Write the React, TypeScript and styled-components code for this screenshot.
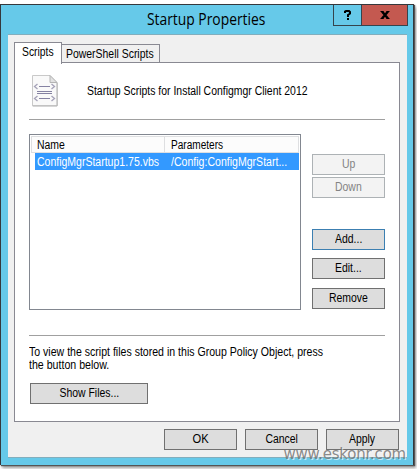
import React from 'react';
import styled, { createGlobalStyle } from 'styled-components';

const GlobalStyle = createGlobalStyle`
  * { box-sizing: border-box; }
  body { margin: 0; background: #fff; overflow: hidden; }
`;

const Page = styled.div`
  position: relative;
  width: 417px;
  height: 469px;
  padding-top: 4px;
  font: 12px/13px 'Liberation Sans', Arial, sans-serif;
  color: #000;
`;

const Window = styled.div`
  display: flex;
  flex-direction: column;
  width: 414px;
  height: 461px;
  padding: 0 7px 7px;
  background: #66c9e9;
  border: 1px solid #35383c;
  border-bottom-width: 0;
  box-shadow: 1px 1px 1px #555, 2px 3px 3px #999;
`;

const TitleBar = styled.header`
  display: flex;
  height: 29px;
  margin-right: -2px;
  flex-shrink: 0;
`;

const Title = styled.h1`
  flex: 1;
  margin: 0;
  padding: 4px 0 0 139px;
  font: 16px/20px 'Open Sans', 'Noto Sans', sans-serif;
  white-space: nowrap;
`;

const CaptionButton = styled.button<{ $close?: boolean }>`
  display: flex;
  align-items: center;
  justify-content: center;
  width: ${p => (p.$close ? 47 : 29)}px;
  height: 21px;
  flex-shrink: 0;
  margin: 0 0 0 ${p => (p.$close ? -1 : 0)}px;
  padding: 0;
  border: 1px solid #35444d;
  border-top: 0;
  background: ${p => (p.$close ? '#c45950' : 'transparent')};
  color: #000;
`;

const Client = styled.main`
  display: flex;
  flex-direction: column;
  width: 399px;
  height: 424px;
  padding: 8px 6px 0;
  background: #f0f0f0;
  border-top: 1px solid #82aebd;
  border-bottom: 1px solid #82aebd;
`;

const Tabs = styled.nav`
  display: flex;
  align-items: flex-end;
  height: 20px;
  margin-top: -1px;
  position: relative;
  z-index: 1;
`;

const Tab = styled.div<{ $active?: boolean }>`
  width: ${p => (p.$active ? 48 : 98)}px;
  height: ${p => (p.$active ? 22 : 18)}px;
  margin-bottom: ${p => (p.$active ? -2 : 0)}px;
  padding: ${p => (p.$active ? '3px 0 0 7px' : '3px 0 0 4px')};
  border: 1px solid #898992;
  border-bottom: 0;
  border-left-width: ${p => (p.$active ? 1 : 0)}px;
  background: ${p => (p.$active ? '#fff' : '#f0f0f0')};
  white-space: nowrap;
`;

const Panel = styled.section`
  display: flex;
  flex-direction: column;
  width: 386px;
  height: 360px;
  padding: 12px 14px 0;
  border: 1px solid #898992;
  background: #fff;
`;

const Label = styled.span<{ $stretch?: number; $center?: boolean }>`
  display: inline-block;
  white-space: nowrap;
  transform: scaleX(${p => p.$stretch ?? 0.87});
  transform-origin: ${p => (p.$center ? 'center' : 'left')};
`;

const Heading = styled.div`
  display: flex;
  height: 44px;
  padding-left: 3px;
  gap: 29px;
  & > span { padding-top: 10px; }
`;

const Rule = styled.div`
  width: 356px;
  height: 1px;
  flex-shrink: 0;
  background: #a0a0a0;
`;

const Content = styled.div`
  display: flex;
  gap: 11px;
  height: 201px;
  margin-top: 14px;
`;

const List = styled.div`
  width: 272px;
  height: 176px;
  padding: 1px;
  border: 1px solid #828790;
`;

const ListHeader = styled.div`
  display: grid;
  grid-template-columns: 134px 134px;
  height: 17px;
`;

const ColumnHeader = styled.div`
  padding: 2px 0 0 6px;
  background: #fcfcfc;
  border: 1px solid #dedfe1;
  border-left-width: 0;
  &:first-child { border-left-width: 1px; padding-left: 5px; }
`;

const ListRow = styled.div`
  display: grid;
  grid-template-columns: 134px 129px;
  height: 17px;
  margin-left: 4px;
  padding: 3px 0 0 2px;
  background: #3399ff;
  color: #fff;
`;

const Actions = styled.div`
  display: flex;
  flex-direction: column;
  padding-top: 20px;
`;

const ButtonFace = styled.button<{ $width?: number; $top?: number; $focus?: boolean }>`
  display: flex;
  align-items: center;
  justify-content: center;
  flex-shrink: 0;
  width: ${p => p.$width ?? 73}px;
  height: 21px;
  margin: ${p => p.$top ?? 0}px 0 0;
  padding: 0;
  font: inherit;
  color: #000;
  background: #dddddd;
  border: 1px solid ${p => (p.$focus ? '#3c7fb1' : '#707070')};
  &:disabled { color: #838383; background: #f3f3f3; border-color: #adb2b5; }
`;

type ButtonProps = React.ComponentProps<typeof ButtonFace> & { stretch?: number };

const Button = ({ children, stretch, ...rest }: ButtonProps) => (
  <ButtonFace {...rest}><Label $center $stretch={stretch}>{children}</Label></ButtonFace>
);

const Note = styled.p`
  margin: 10px 0 11px;
`;

const ShowFilesRow = styled.div`
  padding-left: 1px;
`;

const Footer = styled.footer`
  display: flex;
  justify-content: flex-end;
  gap: 8px;
  width: 385px;
  margin-top: 7px;
`;

const Watermark = styled.div`
  position: absolute;
  right: 11px;
  top: 444px;
  font: 15px/20px 'DejaVu Sans', sans-serif;
  letter-spacing: -0.22px;
  color: rgba(110, 110, 110, 0.8);
  text-shadow: 1px 1px 0 rgba(255, 255, 255, 0.6);
  pointer-events: none;
`;

const ScriptIcon = () => (
  <svg width="26" height="32" viewBox="0 0 26 32" fill="none">
    <path d="M.5 .5H18L25 7.5V31H.5Z" fill="#f9f9f9" stroke="#c9c9c9" />
    <path d="M1 30.8H25.2V8" stroke="#b5b5b5" />
    <path d="M18 .5V7.5H25Z" fill="#e2e2e2" stroke="#b4b4b4" />
    <path d="M5.5 9L2.5 11.5L5.5 14M19.5 9L22.5 11.5L19.5 14M5.5 21L2.5 23.5L5.5 26M19.5 21L22.5 23.5L19.5 26" stroke="#a5a2b8" strokeWidth="1.3" />
    <path d="M7 11.5H18M7 23.5H18M5 16.5H20M5 18.5H20" stroke="#8582a2" />
  </svg>
);

const HelpGlyph = () => (
  <svg width="8" height="10" viewBox="0 0 8 10" fill="none" stroke="#000" strokeWidth="2">
    <path d="M1 3V1.5L2 1H5L6 2V3.5L4 5V7M3 9H5" />
  </svg>
);

const CloseGlyph = () => (
  <svg width="10" height="8" viewBox="0 0 10 8" fill="none" stroke="#000">
    <path d="M2 .5L8 7.5M8 .5L2 7.5" strokeWidth="2.4" />
    <path d="M.5 .5H3.5M6.5 .5H9.5M.5 7.5H3.5M6.5 7.5H9.5" />
  </svg>
);

export default function App() {
  return (
    <Page>
      <GlobalStyle />
      <Window>
        <TitleBar>
          <Title><Label $stretch={0.865}>Startup Properties</Label></Title>
          <CaptionButton aria-label="Help"><HelpGlyph /></CaptionButton>
          <CaptionButton $close aria-label="Close"><CloseGlyph /></CaptionButton>
        </TitleBar>
        <Client>
          <Tabs>
            <Tab $active><Label $stretch={0.86}>Scripts</Label></Tab>
            <Tab><Label>PowerShell Scripts</Label></Tab>
          </Tabs>
          <Panel>
            <Heading>
              <ScriptIcon />
              <Label>Startup Scripts for Install Configmgr Client 2012</Label>
            </Heading>
            <Rule />
            <Content>
              <List>
                <ListHeader>
                  <ColumnHeader><Label>Name</Label></ColumnHeader>
                  <ColumnHeader><Label $stretch={0.84}>Parameters</Label></ColumnHeader>
                </ListHeader>
                <ListRow>
                  <Label $stretch={0.875}>ConfigMgrStartup1.75.vbs</Label>
                  <Label $stretch={0.88}>/Config:ConfigMgrStart...</Label>
                </ListRow>
              </List>
              <Actions>
                <Button disabled>Up</Button>
                <Button disabled $top={2}>Down</Button>
                <Button $focus $top={31}>Add...</Button>
                <Button $top={8}>Edit...</Button>
                <Button $top={9}>Remove</Button>
              </Actions>
            </Content>
            <Rule />
            <Note>
              <Label $stretch={0.88}>To view the script files stored in this Group Policy Object, press</Label>
              <br />
              <Label $stretch={0.885}>the button below.</Label>
            </Note>
            <ShowFilesRow><Button $width={118}>Show Files...</Button></ShowFilesRow>
          </Panel>
          <Footer>
            <Button stretch={0.93}>OK</Button>
            <Button>Cancel</Button>
            <Button>Apply</Button>
          </Footer>
        </Client>
      </Window>
      <Watermark>www.eskonr.com</Watermark>
    </Page>
  );
}
